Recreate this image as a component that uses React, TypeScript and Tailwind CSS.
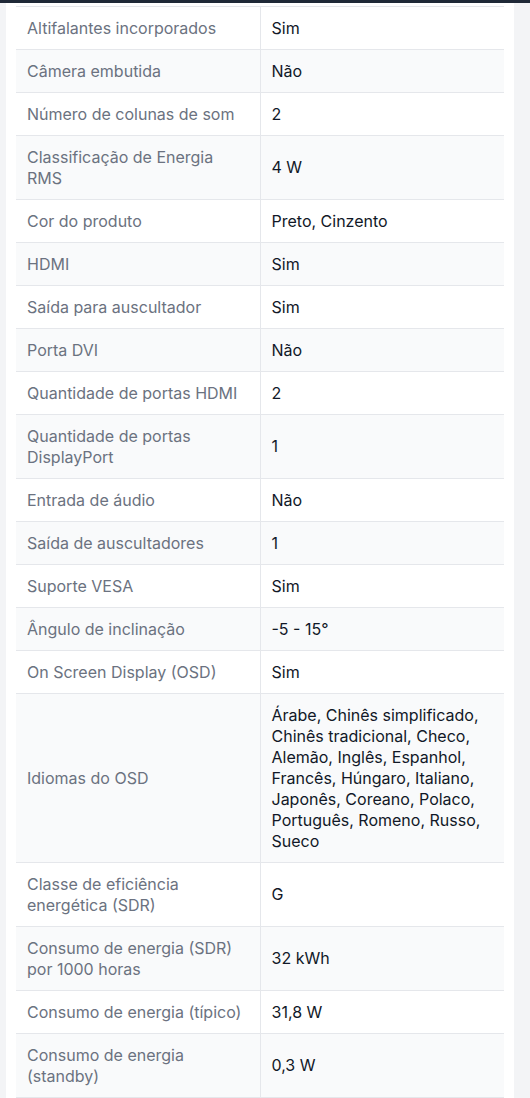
import React from 'react';

type Spec = { label: string; value: string };

const specs: Spec[] = [
  { label: 'Altifalantes incorporados', value: 'Sim' },
  { label: 'Câmera embutida', value: 'Não' },
  { label: 'Número de colunas de som', value: '2' },
  { label: 'Classificação de Energia RMS', value: '4 W' },
  { label: 'Cor do produto', value: 'Preto, Cinzento' },
  { label: 'HDMI', value: 'Sim' },
  { label: 'Saída para auscultador', value: 'Sim' },
  { label: 'Porta DVI', value: 'Não' },
  { label: 'Quantidade de portas HDMI', value: '2' },
  { label: 'Quantidade de portas DisplayPort', value: '1' },
  { label: 'Entrada de áudio', value: 'Não' },
  { label: 'Saída de auscultadores', value: '1' },
  { label: 'Suporte VESA', value: 'Sim' },
  { label: 'Ângulo de inclinação', value: '-5 - 15°' },
  { label: 'On Screen Display (OSD)', value: 'Sim' },
  {
    label: 'Idiomas do OSD',
    value:
      'Árabe, Chinês simplificado, Chinês tradicional, Checo, Alemão, Inglês, Espanhol, Francês, Húngaro, Italiano, Japonês, Coreano, Polaco, Português, Romeno, Russo, Sueco',
  },
  { label: 'Classe de eficiência energética (SDR)', value: 'G' },
  { label: 'Consumo de energia (SDR) por 1000 horas', value: '32 kWh' },
  { label: 'Consumo de energia (típico)', value: '31,8 W' },
  { label: 'Consumo de energia (standby)', value: '0,3 W' },
];

const App: React.FC = () => {
  return (
    <div className="min-h-[1098px] bg-[#f3f4f6] font-['Inter',sans-serif]">
      {/* top bar */}
      <div className="h-[3px] bg-[#1f2937]" />

      <div className="ml-[6px] mr-[16px] bg-white px-[10px] pt-[3px]">
        <table className="w-full table-fixed border-collapse text-[16px] leading-[21px]">
          <tbody>
            {specs.map((s, i) => (
              <tr
                key={s.label}
                className={`border-t border-b border-[#e5e7eb] ${i % 2 === 1 ? 'bg-[#f9fafb]' : 'bg-white'}`}
              >
                <td className="w-1/2 border-r border-[#e5e7eb] px-[11px] py-[10.5px] align-middle text-[#6b7280]">
                  {s.label}
                </td>
                <td className="w-1/2 px-[11px] py-[10.5px] align-middle text-[#111827]">{s.value}</td>
              </tr>
            ))}
          </tbody>
        </table>
      </div>
    </div>
  );
};

export default App;
